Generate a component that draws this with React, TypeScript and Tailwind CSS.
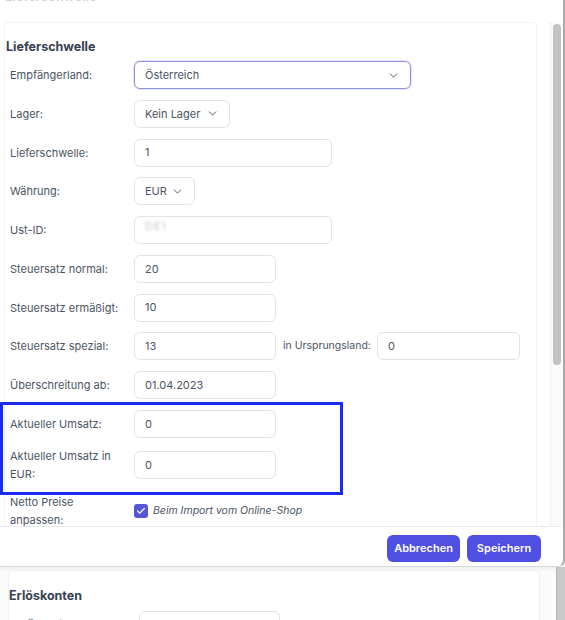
import React from "react";
import { ChevronDown, Check } from "lucide-react";

function Field({ value, w, focused = false, blurred = false }: { value: string; w: string; focused?: boolean; blurred?: boolean }) {
  return (
    <div
      className={`h-[28px] ${w} shrink-0 rounded-[6px] border bg-white px-[10px] flex items-center text-[11px] text-[#4b5563] overflow-hidden ${
        focused ? "border-[#8f93dd]" : "border-[#e1e3e8]"
      }`}
    >
      {blurred ? (
        <span className="blur-[1.4px] text-[#c3c6cd] tracking-[1px] -translate-y-[4px]">DE1</span>
      ) : (
        value
      )}
    </div>
  );
}

function Select({ value, w, focused = false }: { value: string; w: string; focused?: boolean }) {
  return (
    <div
      className={`h-[28px] ${w} shrink-0 rounded-[6px] border bg-white pl-[10px] pr-[10px] flex items-center justify-between text-[11px] text-[#4b5563] ${
        focused ? "border-[#8f93dd] shadow-[0_0_0_1px_rgba(143,147,221,0.25)]" : "border-[#e1e3e8]"
      }`}
    >
      <span>{value}</span>
      <ChevronDown size={13} strokeWidth={1.8} className="text-[#4b5563]" />
    </div>
  );
}

function Row({ label, children, tall = false }: { label: React.ReactNode; children: React.ReactNode; tall?: boolean }) {
  return (
    <div className={`flex items-center ${tall ? "h-[36px]" : "h-[28px]"}`}>
      <div className="w-[124px] shrink-0 text-[11px] leading-[18px] text-[#4b5563]">{label}</div>
      {children}
    </div>
  );
}

export default function App() {
  return (
    <div className="w-[565px] h-[620px] overflow-hidden bg-[#fbfbfc] font-[family-name:Inter,'Noto_Sans',sans-serif]">
      {/* dialog */}
      <div className="w-[565px] h-[567px] bg-white border-r-2 border-r-[#a9a9a9] border-b border-b-[#d8d8dc] rounded-br-[7px] flex flex-col shadow-[0_2px_4px_rgba(0,0,0,0.06)]">
        <div className="h-[22px] shrink-0 overflow-hidden pl-[5px]">
          <div className="-mt-[13px] text-[13px] font-semibold text-[#d0d3d9]">Lieferschwelle</div>
        </div>

        <div className="flex h-[504px] shrink-0">
          <div className="w-[550px] overflow-hidden">
            <div className="ml-[4px] w-[533px] h-[520px] border border-[#f1f2f4] rounded-[4px] pt-[16px]">
              <div className="pl-[1px] text-[12.5px] leading-[16px] font-bold text-[#374151]">Lieferschwelle</div>

              <div className="mt-[6px] pl-[5px] flex flex-col gap-[10.75px]">
                <Row label="Empfängerland:">
                  <Select value="Österreich" w="w-[277px]" focused />
                </Row>
                <Row label="Lager:">
                  <Select value="Kein Lager" w="w-[96px]" />
                </Row>
                <Row label="Lieferschwelle:">
                  <Field value="1" w="w-[198px]" />
                </Row>
                <Row label="Währung:">
                  <Select value="EUR" w="w-[61px]" />
                </Row>
                <Row label="Ust-ID:">
                  <Field value="" w="w-[198px]" blurred />
                </Row>
                <Row label="Steuersatz normal:">
                  <Field value="20" w="w-[142px]" />
                </Row>
                <Row label="Steuersatz ermäßigt:">
                  <Field value="10" w="w-[142px]" />
                </Row>
                <Row label="Steuersatz spezial:">
                  <Field value="13" w="w-[142px]" />
                  <span className="ml-[7px] mr-[6px] whitespace-nowrap text-[10.5px] text-[#4b5563]">in Ursprungsland:</span>
                  <Field value="0" w="w-[143px]" />
                </Row>
                <Row label="Überschreitung ab:">
                  <Field value="01.04.2023" w="w-[142px]" />
                </Row>
              </div>

              {/* highlighted turnover rows */}
              <div className="-ml-[5px] mt-[3px] w-[343px] border-[3px] border-[#1a2cf3] pl-[7px] pt-[5px] pb-[9px] flex flex-col gap-[9px]">
                <Row label="Aktueller Umsatz:">
                  <Field value="0" w="w-[142px]" />
                </Row>
                <Row label={<>Aktueller Umsatz in<br />EUR:</>} tall>
                  <Field value="0" w="w-[142px]" />
                </Row>
              </div>

              <div className="pl-[5px] -mt-[2px]">
                <Row label={<>Netto Preise<br />anpassen:</>} tall>
                  <div className="flex items-center gap-[5px]">
                    <div className="w-[14px] h-[14px] rounded-[3px] bg-[#5856d6] flex items-center justify-center">
                      <Check size={10} strokeWidth={3} className="text-white" />
                    </div>
                    <span className="text-[10.5px] italic text-[#4b5563]">Beim Import vom Online-Shop</span>
                  </div>
                </Row>
              </div>
            </div>
          </div>

          {/* scrollbar */}
          <div className="w-[13px] shrink-0 bg-[#fafafa] border-l border-[#f0f0f0] pt-[2px] pl-[2px]">
            <div className="w-[8px] h-[341px] rounded-full bg-[#c2c2c2]" />
          </div>
        </div>

        <div className="flex-1 border-t border-[#e9eaee] flex justify-end items-start gap-[7px] pt-[8px] pr-[22px]">
          <button className="h-[27px] w-[73px] rounded-[6px] bg-[#4f4fe3] text-white text-[11px] font-semibold">Abbrechen</button>
          <button className="h-[27px] w-[74px] rounded-[6px] bg-[#4f4fe3] text-white text-[11px] font-semibold">Speichern</button>
        </div>
      </div>

      {/* page behind the dialog */}
      <div className="flex">
        <div className="w-[556px] pt-[3px] pl-[8px]">
          <div className="w-[532px] h-[60px] bg-white border border-[#eeeff2] rounded-[6px] pt-[17px]">
            <div className="text-[12.5px] leading-[16px] font-bold text-[#374151]">Erlöskonten</div>
            <div className="mt-[7px] pl-[5px] flex items-start">
              <div className="w-[125px] pt-[5px] text-[11px] text-[#4b5563]">Erlöskonten normal:</div>
              <div className="h-[28px] w-[141px] rounded-[6px] border border-[#e1e3e8] px-[10px] pt-[5px] text-[11px] text-[#4b5563]">8001</div>
            </div>
          </div>
        </div>
        <div className="w-[9px] h-[60px] bg-[#c9c9c9] border-l border-[#b5b5b5]" />
      </div>
    </div>
  );
}
